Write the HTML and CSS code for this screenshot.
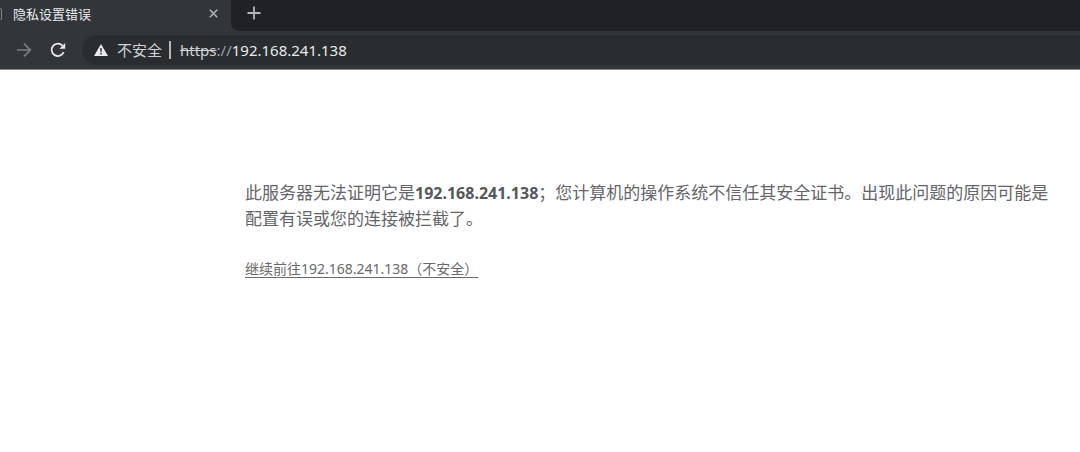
FILE: index.html
```
<!DOCTYPE html>
<html lang="zh-CN">
<head>
    <meta charset="UTF-8">
    <meta name="viewport" content="width=device-width, initial-scale=1.0">
    <title>隐私设置错误</title>
    <link rel="stylesheet" href="styles.css">
</head>
<body>
    <header class="browser">
        <div class="tab-strip">
            <div class="tab">
                <span class="favicon"></span>
                <span class="tab-title">隐私设置错误</span>
                <button type="button" class="icon-button tab-close" aria-label="关闭">
                    <svg width="9" height="9" viewBox="0 0 9 9"><path d="M0.8 0.8l7.4 7.4M8.2 0.8L0.8 8.2" stroke="currentColor" stroke-width="1.5"/></svg>
                </button>
            </div>
            <div class="strip-rest">
                <button type="button" class="icon-button" aria-label="新标签页">
                    <svg width="14" height="14" viewBox="0 0 14 14"><path d="M7 0.5v13M0.5 7h13" stroke="currentColor" stroke-width="1.8"/></svg>
                </button>
            </div>
        </div>
        <div class="toolbar">
            <button type="button" class="icon-button forward" aria-label="前进">
                <svg width="16" height="16" viewBox="0 0 16 16" fill="none" stroke="currentColor" stroke-width="1.6"><path d="M1 8h13M8 1.6L14.4 8 8 14.4"/></svg>
            </button>
            <button type="button" class="icon-button reload" aria-label="重新加载">
                <svg width="16" height="16" viewBox="0 0 16 16"><path d="M13.6 10.2A6.2 6.2 0 1 1 12.5 3.7" fill="none" stroke="currentColor" stroke-width="1.8"/><path d="M15.2 1v5.8H9.4z" fill="currentColor"/></svg>
            </button>
            <div class="address-bar">
                <svg class="warning" width="14" height="12" viewBox="0 0 14 12"><path d="M7 0l7 12H0z" fill="#e8eaed"/><path d="M7 4v3.8M7 8.8v1.6" stroke="#292d30" stroke-width="1.4"/></svg>
                <span class="security">不安全</span>
                <span class="url"><s>https</s><span class="slashes">://</span>192.168.241.138</span>
            </div>
        </div>
    </header>
    <main class="content">
        <p class="message">此服务器无法证明它是<strong>192.168.241.138</strong>；您计算机的操作系统不信任其安全证书。出现此问题的原因可能是配置有误或您的连接被拦截了。</p>
        <a href="#" class="proceed">继续前往192.168.241.138（不安全）</a>
    </main>
</body>
</html>
```

FILE: styles.css
```
body {
    margin: 0;
    background-color: #fff;
    font-family: "Noto Sans", "Noto Sans CJK SC", sans-serif;
}
.browser {
    background-color: #323639;
    color: #e8eaed;
    border-bottom: 1px solid #888;
}
.tab-strip {
    display: flex;
    height: 31px;
}
.tab {
    display: flex;
    align-items: center;
    box-sizing: border-box;
    width: 231px;
    padding: 0 13px 4px 0;
    font-size: 13px;
}
.favicon {
    box-sizing: border-box;
    width: 2px;
    height: 12px;
    margin-right: 11px;
    border: 1px solid #85888b;
    border-left: none;
    border-radius: 0 2px 2px 0;
}
.tab-title {
    flex: 1;
}
.strip-rest {
    display: flex;
    align-items: center;
    flex: 1;
    padding: 0 16px 5px;
    background-color: #202124;
    border-bottom-left-radius: 8px;
    box-sizing: border-box;
}
.icon-button {
    display: flex;
    padding: 0;
    border: none;
    background: none;
    color: #b4b7ba;
    cursor: pointer;
}
.toolbar {
    display: flex;
    align-items: center;
    height: 38px;
}
.forward {
    margin-left: 16px;
    color: #7c7f82;
}
.reload {
    margin: 0 16px 0 18px;
    color: #e8eaed;
}
.address-bar {
    display: flex;
    align-items: center;
    flex: 1;
    height: 30px;
    padding-left: 12px;
    background-color: #292d30;
    border-radius: 15px 0 0 15px;
    font-size: 15px;
    line-height: 18px;
}
.security {
    margin-left: 9px;
    padding-right: 7px;
    border-right: 2px solid #b4b7ba;
    color: #d0d2d5;
}
.url {
    margin-left: 9px;
}
.url s {
    color: #d0d2d5;
}
.slashes {
    color: #9aa0a6;
}
.content {
    max-width: 812px;
    margin: 110px 16px 0 245px;
    color: #646569;
}
.message {
    margin: 0 0 25px;
    font-size: 17px;
    line-height: 26px;
}
.message strong {
    font-size: 16px;
    color: #55565c;
}
.proceed {
    display: inline-block;
    font-size: 14px;
    line-height: 24px;
    color: #696969;
    text-underline-offset: 3px;
}
```
